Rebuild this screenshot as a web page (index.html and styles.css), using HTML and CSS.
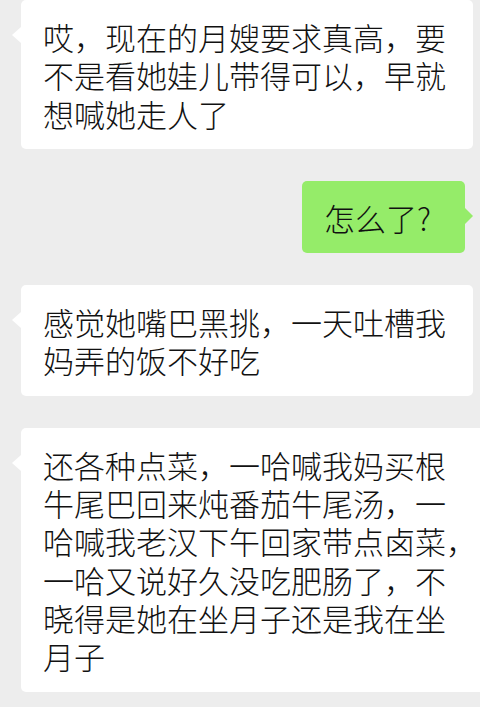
FILE: index.html
```html
<!DOCTYPE html>
<html lang="zh-CN">
<head>
  <meta charset="UTF-8">
  <meta name="viewport" content="width=device-width, initial-scale=1.0">
  <title>聊天记录</title>
  <link rel="stylesheet" href="styles.css">
</head>
<body>
  <main class="chat">
    <div class="row left">
      <p class="bubble">哎，现在的月嫂要求真高，要<br>不是看她娃儿带得可以，早就<br>想喊她走人了</p>
    </div>
    <div class="row right">
      <p class="bubble mine">怎么了?</p>
    </div>
    <div class="row left">
      <p class="bubble">感觉她嘴巴黑挑，一天吐槽我<br>妈弄的饭不好吃</p>
    </div>
    <div class="row left">
      <p class="bubble">还各种点菜，一哈喊我妈买根<br>牛尾巴回来炖番茄牛尾汤，一<br>哈喊我老汉下午回家带点卤菜，<br>一哈又说好久没吃肥肠了，不<br>晓得是她在坐月子还是我在坐<br>月子</p>
    </div>
  </main>
</body>
</html>
```

FILE: styles.css
```css
* {
  box-sizing: border-box;
}

body {
  margin: 0;
  background: #ededed;
  overflow: hidden;
  font-family: "Noto Sans CJK SC", "Noto Sans", sans-serif;
}

.chat {
  display: flex;
  flex-direction: column;
  gap: 32px;
}

.row {
  display: flex;

  &.left {
    padding-left: 21px;
  }

  &.right {
    justify-content: flex-end;
    padding-right: 15px;
  }
}

.bubble {
  position: relative;
  margin: 0;
  padding: 18px 27px 16px 22px;
  background: #fff;
  border-radius: 5px;
  color: #111;
  font-size: 31px;
  font-weight: 300;
  line-height: 38.3px;
  white-space: nowrap;

  /* little tail pointing at the sender */
  &::before {
    content: "";
    position: absolute;
    top: 27px;
    left: -9px;
    border-top: 8px solid transparent;
    border-bottom: 8px solid transparent;
    border-right: 9px solid #fff;
  }

  &.mine {
    background: #95ec69;
    padding-right: 34px;

    &::before {
      left: auto;
      right: -8px;
      border-right: 0;
      border-left: 8px solid #95ec69;
    }
  }
}
```
